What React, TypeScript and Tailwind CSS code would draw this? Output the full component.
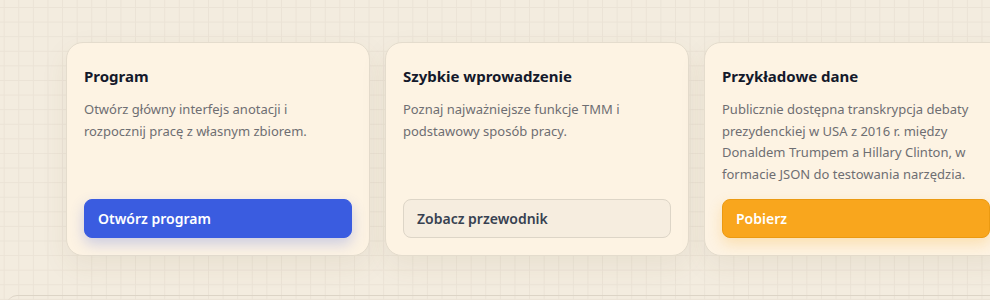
import React from "react";

const cards = [
  {
    title: "Program",
    text: "Otwórz główny interfejs anotacji i rozpocznij pracę z własnym zbiorem.",
    action: "Otwórz program",
    kind: "primary",
  },
  {
    title: "Szybkie wprowadzenie",
    text: "Poznaj najważniejsze funkcje TMM i podstawowy sposób pracy.",
    action: "Zobacz przewodnik",
    kind: "secondary",
  },
  {
    title: "Przykładowe dane",
    text: "Publicznie dostępna transkrypcja debaty prezydenckiej w USA z 2016 r. między Donaldem Trumpem a Hillary Clinton, w formacie JSON do testowania narzędzia.",
    action: "Pobierz",
    kind: "download",
  },
];

const buttonClass: Record<string, string> = {
  primary:
    "bg-[#3a5ce0] border-[#3a5ce0] text-white shadow-[0_6px_14px_rgba(58,92,224,0.25)]",
  secondary: "bg-[#f6eddf] border-[#ddd5c7] text-[#374151]",
  download:
    "bg-[#f9a61d] border-[#eb9a12] text-white shadow-[0_6px_14px_rgba(249,166,29,0.25)]",
};

export default function App() {
  return (
    <div
      className="relative h-[300px] w-[990px] overflow-hidden bg-[#f3ecdf] bg-[linear-gradient(to_right,#ebe3d6_1px,transparent_1px),linear-gradient(to_bottom,#ebe3d6_1px,transparent_1px)] bg-[size:14.6px_14.6px] bg-[position:3.7px_7px]"
      style={{ fontFamily: '"Noto Sans", "Open Sans", sans-serif' }}
    >
      <div className="flex gap-[15px] pl-[66px] pt-[42px]">
        {cards.map((c) => (
          <section
            key={c.title}
            className="flex w-[304px] shrink-0 flex-col rounded-[17px] border border-[#e4dccd] bg-[#fdf3e3] px-[17px] pb-[17px] pt-[22px] shadow-[0_10px_28px_rgba(110,85,40,0.08)]"
          >
            <h2 className="text-[15px] font-bold leading-[22px] text-[#14192b]">
              {c.title}
            </h2>
            <p className="mb-[13px] mt-[12px] text-[13px] leading-[21.7px] text-[#6e6e72]">
              {c.text}
            </p>
            <button
              className={`mt-auto h-[39px] w-full rounded-[8px] border px-[13px] text-left text-[14px] font-semibold ${buttonClass[c.kind]}`}
            >
              {c.action}
            </button>
          </section>
        ))}
      </div>
      <div className="absolute left-[7px] right-0 top-[295px] h-[20px] rounded-tl-[10px] border-t border-[#dcd4c6]" />
    </div>
  );
}
